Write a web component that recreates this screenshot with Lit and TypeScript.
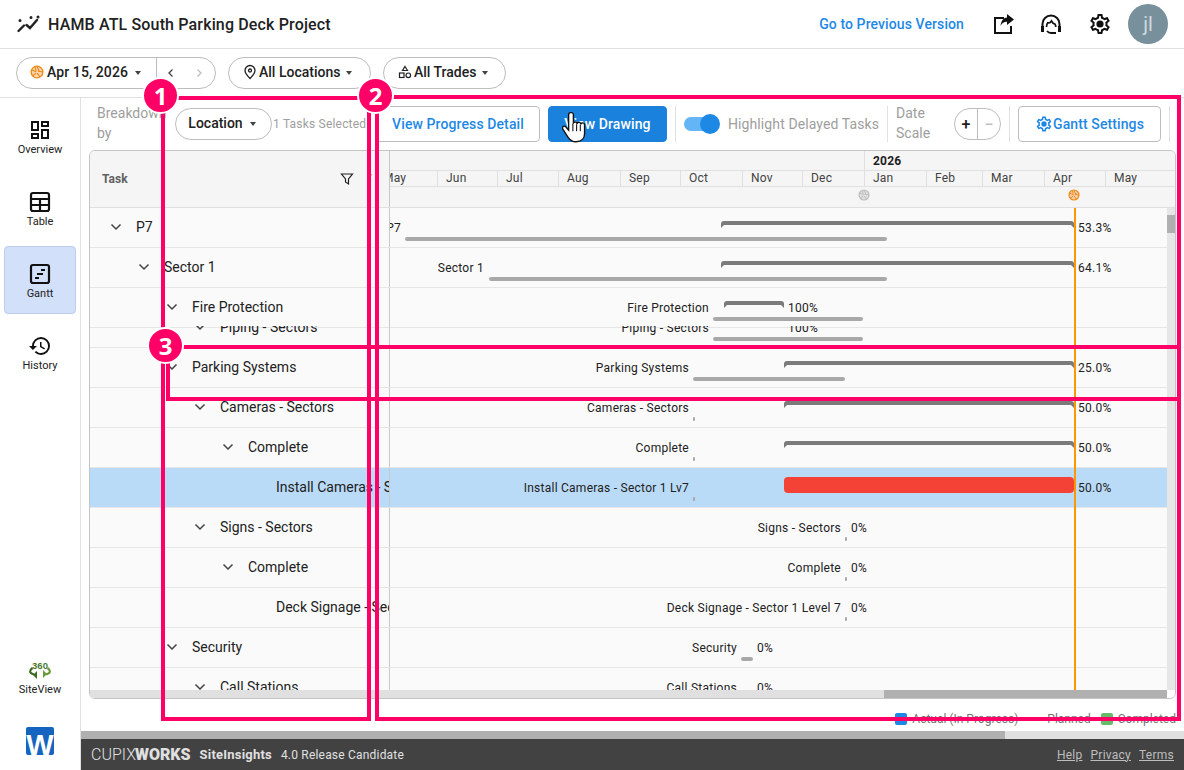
import { html, css, svg, LitElement } from 'lit';
import { customElement } from 'lit/decorators.js';

const TL_LEFT = 390; // page x where the timeline starts
const TL_RIGHT = 1167;

interface Row {
    name: string;
    level: number;
    leaf?: boolean;
    label: string;
    labelEnd: number;
    pct: string;
    pctX: number;
    actual?: [number, number];
    planned?: [number, number];
    delayed?: [number, number];
    selected?: boolean;
    squeezed?: boolean;
}

const ROWS: Row[] = [
    { name: 'P7', level: 0, label: 'P7', labelEnd: 401, pct: '53.3%', pctX: 1078, actual: [721, 1074], planned: [405, 887] },
    { name: 'Sector 1', level: 1, label: 'Sector 1', labelEnd: 484, pct: '64.1%', pctX: 1078, actual: [721, 1074], planned: [489, 887] },
    { name: 'Fire Protection', level: 2, label: 'Fire Protection', labelEnd: 709, pct: '100%', pctX: 788, actual: [724, 784], planned: [713, 863] },
    { name: 'Piping - Sectors', level: 3, label: 'Piping - Sectors', labelEnd: 709, pct: '100%', pctX: 788, planned: [713, 863], squeezed: true },
    { name: 'Parking Systems', level: 2, label: 'Parking Systems', labelEnd: 689, pct: '25.0%', pctX: 1078, actual: [784, 1074], planned: [693, 845] },
    { name: 'Cameras - Sectors', level: 3, label: 'Cameras - Sectors', labelEnd: 689, pct: '50.0%', pctX: 1078, actual: [784, 1074], planned: [693, 695] },
    { name: 'Complete', level: 4, label: 'Complete', labelEnd: 689, pct: '50.0%', pctX: 1078, actual: [784, 1074], planned: [693, 695] },
    { name: 'Install Cameras - Sector 1 Lv7', level: 5, leaf: true, label: 'Install Cameras - Sector 1 Lv7', labelEnd: 689, pct: '50.0%', pctX: 1078, delayed: [784, 1074], planned: [693, 695], selected: true },
    { name: 'Signs - Sectors', level: 3, label: 'Signs - Sectors', labelEnd: 841, pct: '0%', pctX: 851, planned: [845, 847] },
    { name: 'Complete', level: 4, label: 'Complete', labelEnd: 841, pct: '0%', pctX: 851, planned: [845, 847] },
    { name: 'Deck Signage - Sector 1 Level 7', level: 5, leaf: true, label: 'Deck Signage - Sector 1 Level 7', labelEnd: 841, pct: '0%', pctX: 851, planned: [845, 847] },
    { name: 'Security', level: 2, label: 'Security', labelEnd: 737, pct: '0%', pctX: 757, planned: [741, 753] },
    { name: 'Call Stations', level: 3, label: 'Call Stations', labelEnd: 737, pct: '0%', pctX: 757 },
];

const MONTHS: [string, number][] = [
    ['May', 62], ['Jun', 60], ['Jul', 61], ['Aug', 62], ['Sep', 60], ['Oct', 62], ['Nov', 60],
    ['Dec', 62], ['Jan', 62], ['Feb', 56], ['Mar', 62], ['Apr', 61], ['May', 62],
];

const MARKS = [
    { x: 161, y: 96, w: 210, h: 625 },
    { x: 375, y: 95, w: 806, h: 626 },
    { x: 166, y: 345, w: 1015, h: 56 },
];
const BADGES = [
    { n: 1, x: 160.5, y: 95 },
    { n: 2, x: 375.5, y: 95 },
    { n: 3, x: 165.5, y: 345.5 },
];

const GEAR = 'M19.43 12.98c.04-.32.07-.64.07-.98 0-.34-.03-.66-.07-.98l2.11-1.65c.19-.15.24-.42.12-.64l-2-3.46c-.09-.16-.26-.25-.44-.25-.06 0-.12.01-.17.03l-2.49 1c-.52-.4-1.08-.73-1.69-.98l-.38-2.65C14.46 2.18 14.25 2 14 2h-4c-.25 0-.46.18-.49.42l-.38 2.65c-.61.25-1.17.59-1.69.98l-2.49-1c-.06-.02-.12-.03-.18-.03-.17 0-.34.09-.43.25l-2 3.46c-.13.22-.07.49.12.64l2.11 1.65c-.04.32-.07.65-.07.98 0 .33.03.66.07.98l-2.11 1.65c-.19.15-.24.42-.12.64l2 3.46c.09.16.26.25.44.25.06 0 .12-.01.17-.03l2.49-1c.52.4 1.08.73 1.69.98l.38 2.65c.03.24.24.42.49.42h4c.25 0 .46-.18.49-.42l.38-2.65c.61-.25 1.17-.59 1.69-.98l2.49 1c.06.02.12.03.18.03.17 0 .34-.09.43-.25l2-3.46c.12-.22.07-.49-.12-.64l-2.11-1.65zm-1.98-1.71c.04.31.05.52.05.73 0 .21-.02.43-.05.73l-.14 1.13.89.7 1.08.84-.7 1.21-1.27-.51-1.04-.42-.9.68c-.43.32-.84.56-1.25.73l-1.06.43-.16 1.13-.2 1.35h-1.4l-.19-1.35-.16-1.13-1.06-.43c-.43-.18-.83-.41-1.23-.71l-.91-.7-1.06.43-1.27.51-.7-1.21 1.08-.84.89-.7-.14-1.13c-.03-.31-.05-.54-.05-.74s.02-.43.05-.73l.14-1.13-.89-.7-1.08-.84.7-1.21 1.27.51 1.04.42.9-.68c.43-.32.84-.56 1.25-.73l1.06-.43.16-1.13.2-1.35h1.39l.19 1.35.16 1.13 1.06.43c.43.18.83.41 1.23.71l.91.7 1.06-.43 1.27-.51.7 1.21-1.07.85-.89.7.14 1.13z';

function gearIcon(size: number, color: string) {
    return html`<svg width=${size} height=${size} viewBox="0 0 24 24" fill=${color}>
        ${svg`<path d=${GEAR}></path><circle cx="12" cy="12" r="3.600"></circle>`}
    </svg>`;
}

function aperture(size: number, color: string) {
    return html`<svg width=${size} height=${size} viewBox="0 0 24 24" fill="none" stroke=${color} stroke-width="2.400">
        ${svg`<circle cx="12" cy="12" r="10" fill=${color} fill-opacity=".35"></circle>
        <path d="M12 2l3.500 8M22 12l-8.500-1.500M17 20.500L12.500 14M4 19l6.500-5M3 8l7.500 3.500M9 3.500l1.500 7.500" stroke-width="2"></path>`}
    </svg>`;
}

const caret = html`<span class="caret"></span>`;

@customElement('app-root')
export class AppRoot extends LitElement {

    static styles = css`
        :host {
            display: block;
            width: 1184px;
            height: 770px;
            position: relative;
            overflow: hidden;
            background: #fff;
            font-family: Roboto, 'Liberation Sans', sans-serif;
            color: #212121;
        }

        svg { display: block; flex: none; }

        .topbar {
            height: 49px;
            box-sizing: border-box;
            border-bottom: 1px solid #e0e0e0;
            display: flex;
            align-items: center;
            padding: 0 16px;
        }
        .title { font-size: 16px; font-weight: 500; margin-left: 8px; color: #212121; letter-spacing: .15px; }
        .prev-link { margin-left: auto; font-size: 14px; font-weight: 500; color: #1e88e5; letter-spacing: .1px; }
        .top-icon { margin-left: 25px; }
        .top-icon.first { margin-left: 27px; }
        .top-icon.mid { margin-left: 22px; }
        .avatar {
            width: 40px;
            height: 40px;
            border-radius: 50%;
            background: #78909c;
            color: #cfd8dc;
            font-size: 20px;
            display: flex;
            align-items: center;
            justify-content: center;
            margin-left: 16px;
        }

        .filterbar {
            height: 49px;
            box-sizing: border-box;
            border-bottom: 1px solid #e0e0e0;
            display: flex;
            align-items: center;
            gap: 12px;
            padding-left: 16px;
        }
        .pill {
            height: 32px;
            box-sizing: border-box;
            border: 1px solid #bdbdbd;
            border-radius: 16px;
            display: flex;
            align-items: center;
            font-size: 14px;
            font-weight: 500;
            background: #fff;
            padding-bottom: 2px;
        }
        .date-pill { width: 200px; padding-bottom: 0; }
        .date-main {
            width: 140px;
            height: 100%;
            box-sizing: border-box;
            border-right: 1px solid #bdbdbd;
            display: flex;
            align-items: center;
            padding: 0 0 2px 13px;
            letter-spacing: .1px;
        }
        .date-main span:first-of-type { margin-left: 3px; }
        .date-main .caret { margin-left: 7px; }
        .date-nav { flex: 1; display: flex; justify-content: space-between; padding: 0 10px 0 8px; }
        .caret {
            width: 0;
            height: 0;
            border-left: 3.5px solid transparent;
            border-right: 3.5px solid transparent;
            border-top: 4px solid #424242;
            margin-left: 4px;
            margin-top: 1px;
        }
        .loc-pill { width: 143px; padding-left: 14px; gap: 2px; }
        .trade-pill { width: 123px; padding-left: 14px; gap: 2px; }

        .body { display: flex; height: 672px; }

        .sidebar {
            width: 81px;
            box-sizing: border-box;
            border-right: 1px solid #e0e0e0;
            display: flex;
            flex-direction: column;
            align-items: flex-start;
            padding: 4px 0 0 4px;
            gap: 4px;
        }
        .nav-item {
            width: 72px;
            height: 68px;
            box-sizing: border-box;
            border-radius: 4px;
            border: 1px solid transparent;
            display: flex;
            flex-direction: column;
            align-items: center;
            justify-content: center;
            gap: 1px;
            font-size: 11px;
            color: #212121;
            padding-top: 1px;
        }
        .nav-item.active { background: #d3e0fa; border-color: #bfcdea; }
        .site-view { margin-top: auto; height: auto; gap: 2px; padding-top: 0; }
        .w-logo {
            width: 28px;
            height: 28px;
            margin: 26px 0 15px 22px;
            background: #1565c0;
            border-radius: 2px;
            color: #fff;
            font-family: 'Liberation Sans', sans-serif;
            font-weight: 700;
            font-size: 29px;
            line-height: 36px;
            text-align: center;
            overflow: hidden;
        }

        .main { flex: 1; min-width: 0; display: flex; flex-direction: column; }

        .toolbar {
            height: 52px;
            display: flex;
            align-items: center;
            padding-left: 16px;
            box-sizing: border-box;
            font-size: 14px;
            color: #9e9e9e;
        }
        .two-line { line-height: 20px; width: 70px; margin-bottom: 2px; }
        .two-line.short { width: 40px; margin: 0 18px 2px 0; }
        .loc-select { width: 97px; margin-left: 8px; justify-content: center; color: #212121; gap: 3px; padding-right: 3px; }
        .selected-count { font-size: 12px; width: 104px; margin-left: 1px; letter-spacing: .2px; }
        .btn {
            height: 36px;
            box-sizing: border-box;
            border: 1px solid #bdbdbd;
            border-radius: 4px;
            display: flex;
            align-items: center;
            justify-content: center;
            font-size: 14px;
            font-weight: 500;
            color: #1e88e5;
            letter-spacing: .1px;
        }
        .btn-progress { width: 164px; margin-left: -1px; }
        .btn-drawing { width: 119px; margin-left: 8px; background: #1a82dc; border-color: #1a82dc; color: #fff; }
        .btn-settings { width: 143px; gap: 0; }
        .divider { width: 1px; height: 36px; background: #e0e0e0; margin: 0 8px; }
        .toggle { width: 36px; height: 20px; position: relative; margin-left: 0; }
        .toggle-track {
            width: 32px;
            height: 14px;
            margin-top: 3px;
            border-radius: 7px;
            background: #64b5f6;
        }
        .toggle-knob {
            position: absolute;
            right: 0;
            top: 0;
            width: 20px;
            height: 20px;
            border-radius: 50%;
            background: #1e88e5;
        }
        .toggle-label { margin-left: 8px; white-space: nowrap; letter-spacing: .1px; }
        .zoom-pill { width: 47px; color: #212121; padding-bottom: 0; }
        .zoom-pill span {
            flex: 1;
            height: 100%;
            display: flex;
            align-items: center;
            justify-content: center;
            font-size: 16px;
            font-weight: 500;
        }
        .zoom-pill span + span { border-left: 1px solid #bdbdbd; color: #bdbdbd; }

        .gantt {
            width: 1087px;
            height: 549px;
            margin-left: 8px;
            box-sizing: border-box;
            border: 1px solid #c4c4c4;
            border-radius: 6px;
            overflow: hidden;
            background: #fafafa;
            display: flex;
            flex-direction: column;
        }
        .g-head { height: 57px; flex: none; box-sizing: border-box; display: flex; background: #f5f5f5; border-bottom: 1px solid #e0e0e0; }
        .task-head {
            width: 300px;
            flex: none;
            box-sizing: border-box;
            border-right: 1px solid #c8c8c8;
            display: flex;
            align-items: center;
            padding: 0 13px 0 12px;
            font-size: 12px;
            font-weight: 700;
            color: #616161;
        }
        .task-head span { flex: 1; }
        .head-dots { color: #bdbdbd; font-size: 14px; font-weight: 400; margin-left: 8px; }
        .time-head { flex: 1; min-width: 0; overflow: hidden; font-size: 12px; color: #424242; letter-spacing: .2px; }
        .year-row { height: 19px; display: flex; box-sizing: border-box; }
        .year-cell {
            margin-left: 474px;
            border-left: 1px solid #e0e0e0;
            padding-left: 8px;
            font-weight: 700;
            color: #212121;
            line-height: 21px;
        }
        .month-row {
            height: 17px;
            box-sizing: border-box;
            display: flex;
            margin-left: -15px;
            border-top: 1px solid #e0e0e0;
            border-bottom: 1px solid #e0e0e0;
        }
        .month {
            box-sizing: border-box;
            flex: none;
            padding-left: 8px;
            line-height: 15px;
            border-left: 1px solid #e0e0e0;
        }
        .month:first-child { border-left: none; }
        .mark-row { position: relative; height: 20px; }
        .mark { position: absolute; top: 2px; }

        .g-mid { flex: 1; min-height: 0; display: flex; position: relative; }
        .rows { flex: 1; min-width: 0; overflow: hidden; }
        .row { height: 40px; box-sizing: border-box; border-bottom: 1px solid #e6e6e6; display: flow-root; }
        .row.sel { background: #b9dbf8; }
        .row.squeezed { height: 20px; }
        .row-body { display: flex; height: 39px; }
        .row.squeezed .row-body { margin-top: -20px; clip-path: inset(18px 0 0 0); }
        .cell {
            width: 300px;
            flex: none;
            box-sizing: border-box;
            border-right: 1px solid #c8c8c8;
            display: flex;
            align-items: center;
            font-size: 14px;
            white-space: nowrap;
            overflow: hidden;
            padding-bottom: 1px;
        }
        .chev { width: 20px; flex: none; display: flex; justify-content: center; margin-right: 10px; }
        .chev.none { visibility: hidden; }
        .track { flex: 1; min-width: 0; position: relative; overflow: hidden; font-size: 12px; color: #212121; letter-spacing: .25px; }
        .t-label { position: absolute; top: 0; line-height: 41px; white-space: nowrap; }
        .bracket {
            position: absolute;
            top: 13px;
            height: 4px;
            background: #7b7b7b;
            border-radius: 3px 3px 0 0;
        }
        .bracket::before, .bracket::after {
            content: '';
            position: absolute;
            top: 4px;
            width: 0;
            height: 0;
            border-top: 3px solid #7b7b7b;
        }
        .bracket::before { left: 0; border-right: 3px solid transparent; }
        .bracket::after { right: 0; border-left: 3px solid transparent; }
        .planned { position: absolute; top: 29px; height: 4px; border-radius: 2px; background: #a8a8a8; }
        .delayed { position: absolute; top: 9px; height: 16px; border-radius: 4px; background: #f44336; }
        .today { position: absolute; top: 0; bottom: 0; left: 984px; width: 2px; background: #ff9800; }
        .vscroll { width: 8px; flex: none; background: #e6e6e6; }
        .vthumb { height: 18px; margin-top: 7px; background: #b0b0b0; }
        .hscroll { height: 8px; flex: none; display: flex; background: #fff; }
        .htrack { flex: 1; background: #e0e0e0; display: flex; }
        .hthumb { width: 283px; margin-left: auto; background: #b0b0b0; }
        .hcorner { width: 8px; }

        .legend {
            height: 32px;
            flex: none;
            display: flex;
            align-items: center;
            justify-content: flex-end;
            padding: 7px 8px 0 0;
            box-sizing: border-box;
            font-size: 12px;
            color: #757575;
        }
        .swatch { width: 12px; height: 12px; border-radius: 2px; margin-right: 5px; }
        .swatch.blue { background: #1e88e5; }
        .swatch.green { background: #66bb6a; margin-left: 10px; }
        .legend-planned { margin-left: 29px; }

        .page-scroll { height: 8px; flex: none; background: #e0e0e0; }
        .page-thumb { width: 924px; height: 100%; background: #b0b0b0; }

        .footer {
            height: 31px;
            flex: none;
            background: #424242;
            color: #e0e0e0;
            display: flex;
            align-items: center;
            padding: 0 10px;
            font-size: 12px;
        }
        .brand { font-size: 16px; font-weight: 300; }
        .brand b { font-weight: 900; margin-left: -1px; }
        .product { font-size: 13px; font-weight: 700; margin-left: 9px; letter-spacing: .2px; }
        .release { margin-left: 9px; letter-spacing: .2px; }
        .links { margin-left: auto; display: flex; gap: 8px; color: #bdbdbd; text-decoration: underline; letter-spacing: .25px; }

        .mark-box {
            position: absolute;
            box-sizing: border-box;
            border: 4px solid #ff0066;
            pointer-events: none;
        }
        .badge {
            position: absolute;
            width: 33px;
            height: 33px;
            box-sizing: content-box;
            border: 2px solid #fff;
            border-radius: 50%;
            background: #ff0066;
            color: #fff;
            font-family: 'Noto Sans', 'DejaVu Sans', sans-serif;
            font-size: 24px;
            font-weight: 700;
            line-height: 33px;
            text-align: center;
        }
        .hand { position: absolute; left: 562px; top: 111px; }
    `;

    renderSidebar() {
        return html`
        <div class="sidebar">
            <div class="nav-item">
                <svg width="24" height="24" viewBox="0 0 24 24" fill="#111">
                    <path d="M19 5v2h-4V5h4M9 5v6H5V5h4m10 8v6h-4v-6h4M9 17v2H5v-2h4M21 3h-8v6h8V3zM11 3H3v10h8V3zm10 8h-8v10h8V11zm-10 4H3v6h8v-6z"></path>
                </svg>
                <span>Overview</span>
            </div>
            <div class="nav-item">
                <svg width="24" height="24" viewBox="0 0 24 24" fill="none" stroke="#111" stroke-width="2.200">
                    <rect x="3" y="3" width="18" height="18" rx="2"></rect>
                    <path d="M3 9h18M3 15h18M12 9v12"></path>
                </svg>
                <span>Table</span>
            </div>
            <div class="nav-item active">
                <svg width="24" height="24" viewBox="0 0 24 24" fill="none" stroke="#111" stroke-width="2.200">
                    <rect x="3" y="3" width="18" height="18" rx="2"></rect>
                    <path d="M13 8h4M9 12h6M7 16h4"></path>
                </svg>
                <span>Gantt</span>
            </div>
            <div class="nav-item">
                <svg width="24" height="24" viewBox="0 0 24 24" fill="#111">
                    <path d="M13 3a9 9 0 0 0-9 9H1l3.890 3.890.07.14L9 12H6c0-3.870 3.130-7 7-7s7 3.130 7 7-3.130 7-7 7c-1.930 0-3.680-.79-4.940-2.060l-1.420 1.420A8.954 8.954 0 0 0 13 21a9 9 0 0 0 0-18zm-1 5v5l4.280 2.540.72-1.210-3.500-2.080V8H12z"></path>
                </svg>
                <span>History</span>
            </div>
            <div class="nav-item site-view">
                <svg width="24" height="20" viewBox="0 0 24 20" fill="none">
                    <text x="12" y="8" text-anchor="middle" font-family="Liberation Sans" font-weight="700" font-size="9.500" fill="#4a7a2c">360</text>
                    <path d="M4.500 7C1 9.500 1 12 6 13.500" stroke="#3f6b26" stroke-width="2.200"></path>
                    <path d="M9 10v8l-4-4z" fill="#3f6b26"></path>
                    <path d="M19.500 7C23 9.500 23 12 18 13.500" stroke="#6a9a3a" stroke-width="2.200"></path>
                    <path d="M15 9v8l4-4z" fill="#6a9a3a"></path>
                </svg>
                <span>SiteView</span>
            </div>
            <div class="w-logo">W</div>
        </div>`;
    }

    renderToolbar() {
        return html`
        <div class="toolbar">
            <div class="two-line">Breakdown by</div>
            <div class="pill loc-select">Location ${caret}</div>
            <div class="selected-count">1 Tasks Selected</div>
            <div class="btn btn-progress">View Progress Detail</div>
            <div class="btn btn-drawing">View Drawing</div>
            <div class="divider"></div>
            <div class="toggle">
                <div class="toggle-track"></div>
                <div class="toggle-knob"></div>
            </div>
            <div class="toggle-label">Highlight Delayed Tasks</div>
            <div class="divider"></div>
            <div class="two-line short">Date Scale</div>
            <div class="pill zoom-pill"><span>+</span><span>−</span></div>
            <div class="divider"></div>
            <div class="btn btn-settings">${gearIcon(18, '#1e88e5')}Gantt Settings</div>
            <div class="divider"></div>
        </div>`;
    }

    renderRow(r: Row) {
        const x = (v: number) => v - TL_LEFT;
        const w = TL_RIGHT - TL_LEFT;
        const span = (b: [number, number]) => `left:${x(b[0])}px;width:${b[1] - b[0]}px`;
        return html`
        <div class="row ${r.selected ? 'sel' : ''} ${r.squeezed ? 'squeezed' : ''}">
            <div class="row-body">
                <div class="cell" style="padding-left:${16 + r.level * 28}px">
                    <span class="chev ${r.leaf ? 'none' : ''}">
                        <svg width="12" height="8" viewBox="0 0 12 8" fill="none" stroke="#424242" stroke-width="1.500"><path d="M1.500 1.500L6 6l4.500-4.500"></path></svg>
                    </span>
                    <span>${r.name}</span>
                </div>
                <div class="track">
                    <span class="t-label" style="right:${w - x(r.labelEnd)}px">${r.label}</span>
                    <span class="t-label" style="left:${x(r.pctX)}px">${r.pct}</span>
                    ${r.actual ? html`<div class="bracket" style=${span(r.actual)}></div>` : ''}
                    ${r.delayed ? html`<div class="delayed" style=${span(r.delayed)}></div>` : ''}
                    ${r.planned ? html`<div class="planned" style=${span(r.planned)}></div>` : ''}
                </div>
            </div>
        </div>`;
    }

    renderGantt() {
        return html`
        <div class="gantt">
            <div class="g-head">
                <div class="task-head">
                    <span>Task</span>
                    <svg width="14" height="14" viewBox="0 0 14 14" fill="none" stroke="#212121" stroke-width="1.200"><path d="M1.500 2h11L8.500 7v5l-3-2V7z"></path></svg>
                    <i class="head-dots">⋮</i>
                </div>
                <div class="time-head">
                    <div class="year-row"><div class="year-cell">2026</div></div>
                    <div class="month-row">
                        ${MONTHS.map(([m, w]) => html`<div class="month" style="width:${w}px">${m}</div>`)}
                    </div>
                    <div class="mark-row">
                        <span class="mark" style="left:${864 - TL_LEFT - 6}px">${aperture(12, '#bdbdbd')}</span>
                        <span class="mark" style="left:${1074 - TL_LEFT - 6}px">${aperture(12, '#ef8a1a')}</span>
                    </div>
                </div>
            </div>
            <div class="g-mid">
                <div class="rows">${ROWS.map(r => this.renderRow(r))}</div>
                <div class="today"></div>
                <div class="vscroll"><div class="vthumb"></div></div>
            </div>
            <div class="hscroll">
                <div class="htrack"><div class="hthumb"></div></div>
                <div class="hcorner"></div>
            </div>
        </div>`;
    }

    render() {
        return html`
        <div class="topbar">
            <svg width="24" height="20" viewBox="0 0 24 20" fill="none" stroke="#212121" stroke-width="2.400" stroke-linecap="round">
                <path d="M2.500 17L8 11.500M10.500 11l3.500 3 7-8"></path>
                <path d="M4 6.500h.01M15 3.500h.01M22 3h.01" stroke-width="3"></path>
            </svg>
            <div class="title">HAMB ATL South Parking Deck Project</div>
            <div class="prev-link">Go to Previous Version</div>
            <svg class="top-icon first" width="26" height="26" viewBox="0 0 26 26" fill="#111">
                <path d="M3 6h10v2H5v13h14v-6h2v8H3z"></path>
                <path d="M16 3l7 5.500-7 5.500v-3.200c-3 0-5 1-6.500 4.200.5-5 2.800-8 6.500-8.500z"></path>
            </svg>
            <svg class="top-icon mid" width="24" height="24" viewBox="0 0 24 24" fill="none" stroke="#111" stroke-width="2">
                <path d="M3.500 15.500V12a8.500 8.500 0 0 1 17 0v3.500"></path>
                <path d="M7.500 15c0-1.800.4-3 1.200-4.200 1.800.6 3-.3 3.800-1.800.9 1.700 1.900 2.900 3.500 3.200.5.900.8 1.700.8 2.800" stroke-width="1.700"></path>
                <path d="M8 19c1 1.300 2.400 2 4 2h5" stroke-width="1.800"></path>
                <path d="M3.500 14v6M20.500 14v6" stroke-width="3"></path>
            </svg>
            <span class="top-icon">${gearIcon(24, '#111')}</span>
            <div class="avatar">jl</div>
        </div>

        <div class="filterbar">
            <div class="pill date-pill">
                <div class="date-main">
                    ${aperture(14, '#ef8a1a')}
                    <span>Apr 15, 2026</span>
                    ${caret}
                </div>
                <div class="date-nav">
                    <svg width="12" height="12" viewBox="0 0 12 12" fill="none" stroke="#424242" stroke-width="1.300"><path d="M7.500 2.500L4 6l3.500 3.500"></path></svg>
                    <svg width="12" height="12" viewBox="0 0 12 12" fill="none" stroke="#bdbdbd" stroke-width="1.300"><path d="M4.500 2.500L8 6l-3.500 3.500"></path></svg>
                </div>
            </div>
            <div class="pill loc-pill">
                <svg width="14" height="16" viewBox="0 0 14 16" fill="none" stroke="#212121" stroke-width="1.300">
                    <path d="M7 14.500C4 11.500 2 9.300 2 6.500a5 5 0 0 1 10 0c0 2.800-2 5-5 8z"></path>
                    <circle cx="7" cy="6.500" r="1.500"></circle>
                </svg>
                All Locations ${caret}
            </div>
            <div class="pill trade-pill">
                <svg width="14" height="14" viewBox="0 0 14 14" fill="none" stroke="#212121" stroke-width="1.200">
                    <path d="M7 1.500l2.500 4h-5z"></path>
                    <rect x="1.500" y="8" width="4.500" height="4.500"></rect>
                    <circle cx="10.300" cy="10.300" r="2.300"></circle>
                </svg>
                All Trades ${caret}
            </div>
        </div>

        <div class="body">
            ${this.renderSidebar()}
            <div class="main">
                ${this.renderToolbar()}
                ${this.renderGantt()}
                <div class="legend">
                    <span class="swatch blue"></span>Actual (In Progress)
                    <span class="legend-planned">Planned</span>
                    <span class="swatch green"></span>Completed
                </div>
                <div class="page-scroll"><div class="page-thumb"></div></div>
                <div class="footer">
                    <span class="brand">CUPIX<b>WORKS</b></span>
                    <span class="product">SiteInsights</span>
                    <span class="release">4.0 Release Candidate</span>
                    <span class="links"><span>Help</span><span>Privacy</span><span>Terms</span></span>
                </div>
            </div>
        </div>

        ${MARKS.map(m => html`<div class="mark-box" style="left:${m.x}px;top:${m.y}px;width:${m.w}px;height:${m.h}px"></div>`)}
        ${BADGES.map(b => html`<div class="badge" style="left:${b.x - 18.5}px;top:${b.y - 18.5}px">${b.n}</div>`)}
        <svg class="hand" width="26" height="34" viewBox="0 0 24 32">
            <path d="M8 1.500c-1.200 0-2 .9-2 2V18l-2.500-3c-1-1.100-2.400-1-3 0-.4.7-.3 1.600.2 2.300l4.800 7.500c1.500 2.300 3.500 4.200 7.500 4.200 5 0 8-3 8-7.500V13c0-1-.9-1.800-1.800-1.800s-1.700.6-1.700 1.500c0-1.200-.8-2-1.800-2s-1.700.7-1.700 1.600c0-1.200-.8-2-1.800-2-.7 0-1.200.3-1.700.9V3.500c0-1.100-.9-2-2-2z" fill="#fff" stroke="#111" stroke-width="1.300"></path>
            <path d="M10 12v7M13.500 12.500V19M17 13v6" stroke="#111" stroke-width="1" fill="none"></path>
        </svg>
        `;
    }
}
